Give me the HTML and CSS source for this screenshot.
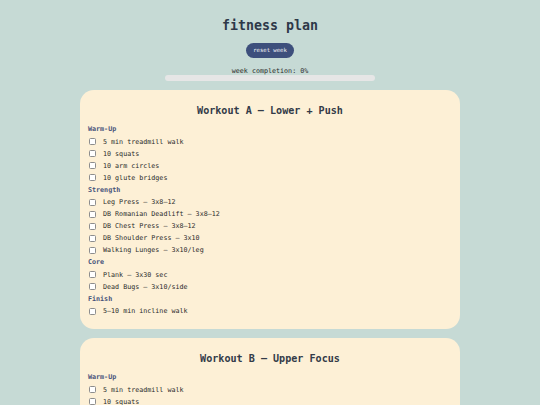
FILE: index.html
```html
<!DOCTYPE html>
<html>
<head>
<meta charset="utf-8">
<link rel="stylesheet" href="styles.css">
</head>
<body>
<div class="page">
  <h1 class="title">fitness plan</h1>
  <button class="reset">reset week</button>
  <div class="completion">week completion: 0%</div>
  <div class="bar"><div class="fill" style="width:0%"></div></div>

  <section class="card">
    <h2 class="card-title">Workout A — Lower + Push</h2>
    <h3 class="sec">Warm-Up</h3>
    <ul class="items">
      <li><input type="checkbox"><span>5 min treadmill walk</span></li>
      <li><input type="checkbox"><span>10 squats</span></li>
      <li><input type="checkbox"><span>10 arm circles</span></li>
      <li><input type="checkbox"><span>10 glute bridges</span></li>
    </ul>
    <h3 class="sec">Strength</h3>
    <ul class="items">
      <li><input type="checkbox"><span>Leg Press — 3x8–12</span></li>
      <li><input type="checkbox"><span>DB Romanian Deadlift — 3x8–12</span></li>
      <li><input type="checkbox"><span>DB Chest Press — 3x8–12</span></li>
      <li><input type="checkbox"><span>DB Shoulder Press — 3x10</span></li>
      <li><input type="checkbox"><span>Walking Lunges — 3x10/leg</span></li>
    </ul>
    <h3 class="sec">Core</h3>
    <ul class="items">
      <li><input type="checkbox"><span>Plank — 3x30 sec</span></li>
      <li><input type="checkbox"><span>Dead Bugs — 3x10/side</span></li>
    </ul>
    <h3 class="sec">Finish</h3>
    <ul class="items">
      <li><input type="checkbox"><span>5–10 min incline walk</span></li>
    </ul>
  </section>

  <section class="card">
    <h2 class="card-title">Workout B — Upper Focus</h2>
    <h3 class="sec">Warm-Up</h3>
    <ul class="items">
      <li><input type="checkbox"><span>5 min treadmill walk</span></li>
      <li><input type="checkbox"><span>10 squats</span></li>
      <li><input type="checkbox"><span>10 arm circles</span></li>
      <li><input type="checkbox"><span>10 band pull-aparts</span></li>
    </ul>
    <h3 class="sec">Strength</h3>
    <ul class="items">
      <li><input type="checkbox"><span>Lat Pulldown — 3x8–12</span></li>
      <li><input type="checkbox"><span>Seated Row — 3x8–12</span></li>
    </ul>
  </section>
</div>
</body>
</html>
```

FILE: styles.css
```css
html, body {
  margin: 0;
  padding: 0;
}
body {
  background: #c6dad5;
  font-family: "DejaVu Sans Mono", "Liberation Mono", monospace;
  color: #222;
}
.page {
  display: flex;
  flex-direction: column;
  align-items: center;
}
.title {
  margin: 18px 0 0;
  font-size: 13.3px;
  line-height: 16px;
  font-weight: bold;
  color: #2e3848;
}
.reset {
  margin-top: 9px;
  height: 15px;
  width: 48px;
  padding: 0;
  border: none;
  border-radius: 8px;
  background: #3d4f7c;
  color: #f4f4f8;
  font-family: inherit;
  font-size: 5.6px;
  font-weight: normal;
  line-height: 15px;
}
.completion {
  margin-top: 9px;
  font-size: 6.7px;
  line-height: 8px;
  color: #2a2a2a;
}
.bar {
  width: 210px;
  height: 6px;
  border-radius: 3px;
  background: #e6e6e6;
  overflow: hidden;
}
.fill {
  height: 100%;
  background: #3d4f7c;
}
.card {
  box-sizing: border-box;
  width: 380px;
  margin-top: 9px;
  padding: 15px 8px 12px;
  background: #fdf0d6;
  border-radius: 14px;
}
.card + .card {
  margin-top: 9px;
}
.card-title {
  margin: 0;
  text-align: center;
  font-size: 10.1px;
  line-height: 12px;
  font-weight: bold;
  color: #333b48;
}
.sec {
  margin: 1px 0 0;
  font-size: 6.7px;
  line-height: 11.5px;
  font-weight: bold;
  color: #46527a;
}
.card-title + .sec {
  margin-top: 7px;
}
.items {
  list-style: none;
  margin: 0;
  padding: 0;
}
.items li {
  display: flex;
  align-items: center;
  gap: 7px;
  height: 12px;
  font-size: 6.7px;
  color: #2b2b2b;
}
.items input {
  appearance: none;
  -webkit-appearance: none;
  box-sizing: border-box;
  width: 7px;
  height: 7px;
  margin: 0 0 0 1px;
  border: 1px solid #8d8d8d;
  border-radius: 1.5px;
  background: #fff;
}
```
